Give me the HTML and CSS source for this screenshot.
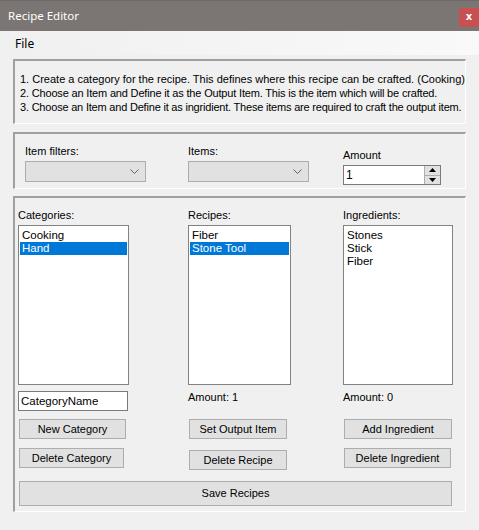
FILE: index.html
```html
<!DOCTYPE html>
<html>
<head>
<meta charset="utf-8">
<link rel="stylesheet" href="styles.css">
</head>
<body>
<div class="window">
  <div class="titlebar">
    <span class="title">Recipe Editor</span>
    <span class="close">x</span>
  </div>
  <div class="menubar"><span class="menu-item">File</span></div>
  <div class="content">
    <div class="panel panel-info">
      <div class="info-line">1. Create a category for the recipe. This defines where this recipe can be crafted. (Cooking)</div>
      <div class="info-line line2">2. Choose an Item and Define it as the Output Item. This is the item which will be crafted.</div>
      <div class="info-line line3">3. Choose an Item and Define it as ingridient. These items are required to craft the output item.</div>
    </div>
    <div class="panel panel-filters">
      <div class="fcol fcol1">
        <div class="label">Item filters:</div>
        <div class="combo"><svg class="chev" width="9" height="5" viewBox="0 0 9 5"><path d="M0.5 0.5 L4.5 4.5 L8.5 0.5" fill="none" stroke="#606060" stroke-width="1"/></svg></div>
      </div>
      <div class="fcol fcol2">
        <div class="label">Items:</div>
        <div class="combo"><svg class="chev" width="9" height="5" viewBox="0 0 9 5"><path d="M0.5 0.5 L4.5 4.5 L8.5 0.5" fill="none" stroke="#606060" stroke-width="1"/></svg></div>
      </div>
      <div class="fcol fcol3">
        <div class="label">Amount</div>
        <div class="numeric">
          <span class="num-val">1</span>
          <div class="spin">
            <div class="spin-btn"><svg width="7" height="4" viewBox="0 0 7 4"><path d="M0 4 L3.5 0 L7 4 Z" fill="#000"/></svg></div>
            <div class="spin-btn"><svg width="7" height="4" viewBox="0 0 7 4"><path d="M0 0 L3.5 4 L7 0 Z" fill="#000"/></svg></div>
          </div>
        </div>
      </div>
    </div>
    <div class="panel panel-main">
      <div class="cols">
        <div class="col col1">
          <div class="label">Categories:</div>
          <div class="list list1">
            <div class="item">Cooking</div>
            <div class="item selected">Hand</div>
          </div>
          <div class="textbox">CategoryName</div>
          <div class="btn btn-new">New Category</div>
          <div class="btn btn-delcat">Delete Category</div>
        </div>
        <div class="col col2">
          <div class="label">Recipes:</div>
          <div class="list list2">
            <div class="item">Fiber</div>
            <div class="item selected">Stone Tool</div>
          </div>
          <div class="amount">Amount: 1</div>
          <div class="btn btn-setout">Set Output Item</div>
          <div class="btn btn-delrec">Delete Recipe</div>
        </div>
        <div class="col col3">
          <div class="label">Ingredients:</div>
          <div class="list list3">
            <div class="item">Stones</div>
            <div class="item">Stick</div>
            <div class="item">Fiber</div>
          </div>
          <div class="amount">Amount: 0</div>
          <div class="btn btn-addingr">Add Ingredient</div>
          <div class="btn btn-delingr">Delete Ingredient</div>
        </div>
      </div>
      <div class="btn btn-save">Save Recipes</div>
    </div>
  </div>
</div>
</body>
</html>
```

FILE: styles.css
```css
html, body {
  margin: 0;
  padding: 0;
  background: #f0f0f0;
}
.window {
  width: 479px;
  height: 530px;
  background: #f0f0f0;
  font-family: "Liberation Sans", Arial, sans-serif;
  font-size: 11px;
  color: #000;
  overflow: hidden;
}
.titlebar {
  height: 31px;
  background: #7b7574;
  border-top: 1px solid #6e6968;
  box-sizing: border-box;
  display: flex;
  align-items: flex-start;
  justify-content: space-between;
}
.title {
  color: #fff;
  font-family: "Noto Sans", sans-serif;
  font-size: 11.5px;
  line-height: 14px;
  margin-left: 8px;
  margin-top: 8px;
}
.close {
  width: 20px;
  height: 19px;
  margin-top: 7px;
  background: #c75050;
  color: #fff;
  font-family: "DejaVu Sans", sans-serif;
  font-weight: bold;
  font-size: 10px;
  line-height: 17px;
  text-align: center;
}
.menubar {
  height: 24px;
  background: linear-gradient(to right, #f0f0f0, #f9f9f9);
  display: flex;
  align-items: center;
}
.menu-item {
  font-family: "Noto Sans", sans-serif;
  font-size: 12px;
  margin-left: 15px;
}
.content {
  padding-left: 13px;
}
.panel {
  width: 453px;
  box-sizing: border-box;
  border-top: 2px solid #a0a0a0;
  border-left: 2px solid #a0a0a0;
  border-right: 1px solid #ffffff;
  border-bottom: 1px solid #ffffff;
}
.panel-info {
  margin-top: 4px;
  height: 65px;
  padding: 11px 0 0 5px;
}
.info-line {
  line-height: 14px;
  white-space: nowrap;
}
.info-line.line2 { letter-spacing: -0.17px; }
.info-line.line3 { letter-spacing: -0.2px; }
.panel-filters {
  margin-top: 8px;
  height: 57px;
  padding: 11px 0 0 10px;
  display: flex;
}
.label {
  line-height: 13px;
  white-space: nowrap;
}
.fcol1 { width: 163px; }
.fcol2 { width: 155px; }
.fcol3 { padding-top: 4px; }
.combo {
  margin-top: 3px;
  width: 121px;
  height: 21px;
  box-sizing: border-box;
  background: #e1e1e1;
  border: 1px solid #adadad;
  position: relative;
}
.chev {
  position: absolute;
  right: 6px;
  top: 7px;
}
.numeric {
  margin-top: 3px;
  width: 98px;
  height: 20px;
  box-sizing: border-box;
  background: #fff;
  border: 1px solid #7a7a7a;
  display: flex;
  justify-content: space-between;
}
.num-val {
  font-size: 12px;
  line-height: 18px;
  margin-left: 2px;
}
.spin {
  width: 15px;
  display: flex;
  flex-direction: column;
  border-left: 1px solid #adadad;
  background: #e1e1e1;
}
.spin-btn {
  flex: 1;
  display: flex;
  align-items: center;
  justify-content: center;
}
.spin-btn + .spin-btn {
  border-top: 1px solid #adadad;
}
.panel-main {
  margin-top: 7px;
  height: 316px;
  padding: 11px 0 0 3px;
}
.cols {
  display: flex;
}
.col { display: flex; flex-direction: column; align-items: flex-start; }
.col1 { width: 170px; }
.col2 { width: 155px; }
.col3 { width: 120px; }
.list {
  margin-top: 3px;
  height: 160px;
  box-sizing: border-box;
  background: #fff;
  border: 1px solid #828282;
  padding: 3px 1px 0 1px;
}
.list1 { width: 111px; }
.list2 { width: 103px; }
.list3 { width: 110px; }
.item {
  font-size: 11.5px;
  line-height: 13px;
  padding-left: 2px;
  white-space: nowrap;
}
.item.selected {
  background: #0078d7;
  color: #fff;
}
.textbox {
  margin-top: 6px;
  width: 110px;
  height: 20px;
  box-sizing: border-box;
  background: #fff;
  border: 1px solid #7a7a7a;
  font-size: 11.5px;
  line-height: 18px;
  padding-left: 2px;
}
.amount {
  margin-top: 6px;
  line-height: 13px;
  height: 13px;
}
.btn {
  box-sizing: border-box;
  height: 20px;
  background: #e1e1e1;
  border: 1px solid #adadad;
  text-align: center;
  line-height: 18px;
  white-space: nowrap;
  margin-left: 1px;
}
.btn-new { width: 107px; margin-top: 8px; }
.btn-delcat { width: 105px; margin-top: 9px; }
.btn-setout { width: 98px; margin-top: 15px; }
.btn-delrec { width: 98px; margin-top: 11px; }
.btn-addingr { width: 108px; margin-top: 15px; }
.btn-delingr { width: 107px; margin-top: 9px; }
.btn-save {
  width: 433px;
  height: 25px;
  line-height: 23px;
  margin-top: 11px;
}
```
